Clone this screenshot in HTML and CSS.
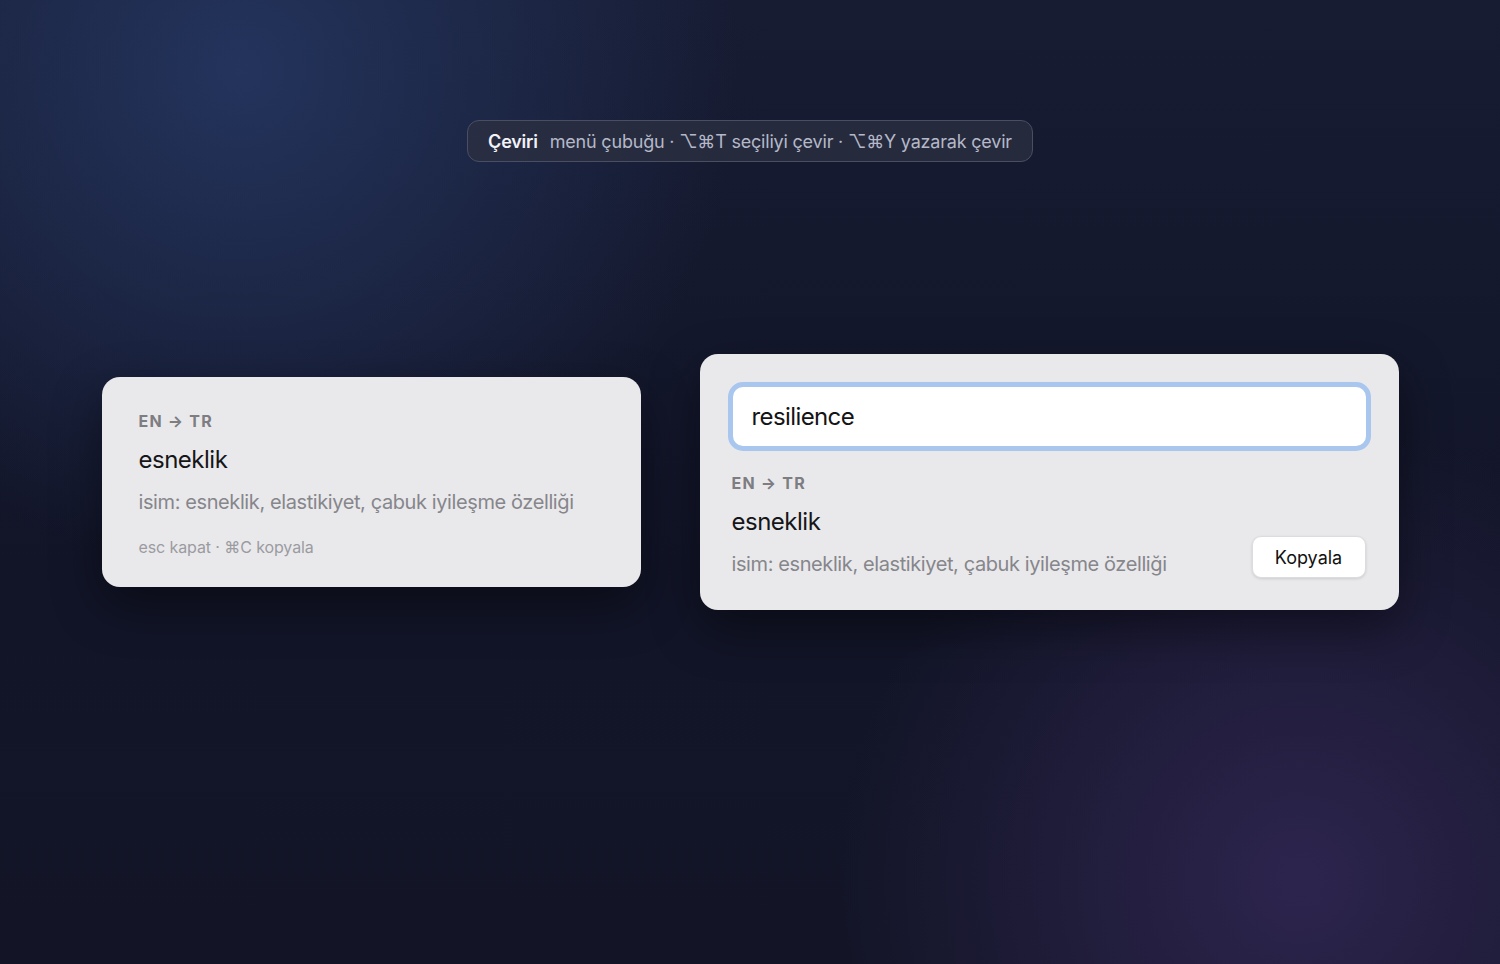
FILE: index.html
```html
<!DOCTYPE html>
<html lang="tr">
<head>
  <meta charset="UTF-8" />
  <title>Çeviri</title>
  <link rel="stylesheet" href="styles.css">
</head>
<body>

  <!-- shortcut hint bar -->
  <div class="hint-bar">
    <span class="app-name">Çeviri</span>
    <span class="hint-text">menü çubuğu · ⌥⌘T seçiliyi çevir · ⌥⌘Y yazarak çevir</span>
  </div>

  <div class="cards">
    <!-- popup after selecting text -->
    <div class="card popup">
      <div class="lang">EN → TR</div>
      <div class="word">esneklik</div>
      <div class="meaning">isim: esneklik, elastikiyet, çabuk iyileşme özelliği</div>
      <div class="keys">esc kapat · ⌘C kopyala</div>
    </div>

    <!-- type-to-translate panel -->
    <div class="card panel">
      <div class="search-box">resilience</div>
      <div class="result">
        <div class="result-text">
          <div class="lang">EN → TR</div>
          <div class="word">esneklik</div>
          <div class="meaning">isim: esneklik, elastikiyet, çabuk iyileşme özelliği</div>
        </div>
        <button class="copy-btn">Kopyala</button>
      </div>
    </div>
  </div>

</body>
</html>
```

FILE: styles.css
```css
html, body {
  height: 100%;
}

body {
  margin: 0;
  font-family: Inter, "Noto Sans", sans-serif;
  background-color: #12152a;
  background-image:
    radial-gradient(circle at 240px 70px, rgba(38, 56, 100, 0.85) 0, rgba(38, 56, 100, 0) 500px),
    radial-gradient(circle at 1300px 880px, rgba(48, 38, 82, 0.9) 0, rgba(48, 38, 82, 0) 460px),
    linear-gradient(180deg, #171c33 0%, #121528 60%, #131527 100%);
  display: flex;
  flex-direction: column;
  align-items: center;
  overflow: hidden;
}

.hint-bar {
  margin-top: 120px;
  height: 40px;
  padding: 0 20px;
  display: flex;
  align-items: center;
  gap: 12px;
  background-color: rgba(44, 48, 66, 0.75);
  border: 1px solid #4a4e62;
  border-radius: 12px;
  font-size: 18px;
  letter-spacing: -0.2px;
  color: #b4b8c8;
}

.app-name {
  color: #f2f3f8;
  font-weight: 600;
}

.cards {
  margin-top: 192px;
  display: flex;
  align-items: center;
  gap: 59px;
}

.card {
  background-color: #e9e9ec;
  border-radius: 18px;
  box-shadow: 0 18px 50px rgba(0, 0, 0, 0.45);
  box-sizing: border-box;
}

.popup {
  width: 539px;
  padding: 34px 37px 30px;
}

.panel {
  width: 699px;
  padding: 28px 28px 33px;
}

.lang {
  font-size: 16px;
  line-height: 20px;
  font-weight: 700;
  letter-spacing: 1.2px;
  color: #7d7d82;
}

.word {
  margin-top: 14px;
  font-size: 24px;
  line-height: 30px;
  letter-spacing: -0.5px;
  color: #161618;
}

.meaning {
  margin-top: 14px;
  font-size: 20px;
  line-height: 26px;
  letter-spacing: -0.4px;
  color: #86868b;
}

.keys {
  margin-top: 22px;
  font-size: 16px;
  line-height: 20px;
  letter-spacing: -0.1px;
  color: #9b9ba0;
}

.search-box {
  height: 69px;
  box-sizing: border-box;
  border: 5px solid #a8c6ee;
  border-radius: 15px;
  background-color: #fff;
  padding-left: 19px;
  display: flex;
  align-items: center;
  font-size: 24px;
  letter-spacing: -0.6px;
  color: #141416;
}

.result {
  margin-top: 22px;
  display: flex;
  justify-content: space-between;
  align-items: flex-end;
}

.result-text {
  padding-left: 4px;
}

.copy-btn {
  margin-right: 5px;
  margin-bottom: -1px;
  width: 114px;
  height: 42px;
  background-color: #fff;
  border: 1px solid #dcdce0;
  border-radius: 9px;
  box-shadow: 0 1px 3px rgba(0, 0, 0, 0.12);
  font-family: inherit;
  font-size: 18px;
  color: #111;
  cursor: pointer;
}
```
